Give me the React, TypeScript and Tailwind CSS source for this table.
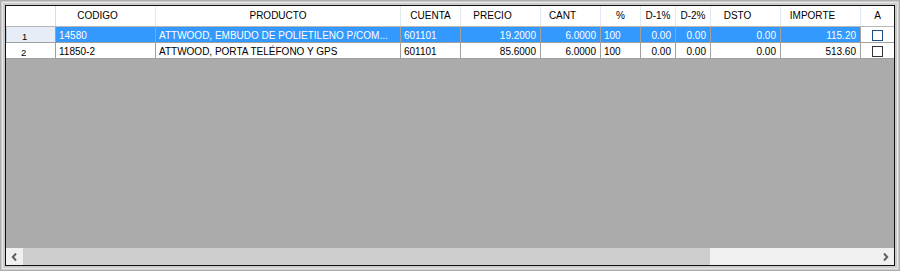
type Col = {
  key: string;
  label: string;
  cell: string;
  head: string;
};

const cols: Col[] = [
  { key: "codigo", label: "CODIGO", cell: "w-[100px] border-r text-left pl-[3px]", head: "w-[100px] pr-[16px]" },
  { key: "producto", label: "PRODUCTO", cell: "w-[245px] border-r text-left pl-[3px]", head: "w-[245px]" },
  { key: "cuenta", label: "CUENTA", cell: "w-[60px] border-r text-left pl-[3px]", head: "w-[60px]" },
  { key: "precio", label: "PRECIO", cell: "w-[80px] border-r text-right pr-[4px]", head: "w-[80px] pr-[16px]" },
  { key: "cant", label: "CANT", cell: "w-[60px] border-r text-right pr-[4px]", head: "w-[60px] pr-[16px]" },
  { key: "pct", label: "%", cell: "w-[40px] border-r text-left pl-[3px]", head: "w-[40px]" },
  { key: "d1", label: "D-1%", cell: "w-[35px] border-r text-right pr-[4px]", head: "w-[35px]" },
  { key: "d2", label: "D-2%", cell: "w-[35px] border-r text-right pr-[4px]", head: "w-[35px]" },
  { key: "dsto", label: "DSTO", cell: "w-[70px] border-r text-right pr-[4px]", head: "w-[70px] pr-[16px]" },
  { key: "importe", label: "IMPORTE", cell: "w-[80px] border-r text-right pr-[4px]", head: "w-[80px] pr-[16px]" },
];

const rows: Record<string, string>[] = [
  {
    codigo: "14580",
    producto: "ATTWOOD, EMBUDO DE POLIETILENO P/COM...",
    cuenta: "601101",
    precio: "19.2000",
    cant: "6.0000",
    pct: "100",
    d1: "0.00",
    d2: "0.00",
    dsto: "0.00",
    importe: "115.20",
  },
  {
    codigo: "11850-2",
    producto: "ATTWOOD, PORTA TELÉFONO Y GPS",
    cuenta: "601101",
    precio: "85.6000",
    cant: "6.0000",
    pct: "100",
    d1: "0.00",
    d2: "0.00",
    dsto: "0.00",
    importe: "513.60",
  },
];

function Chevron({ dir }: { dir: "left" | "right" }) {
  return (
    <svg width="7" height="8" viewBox="0 0 7 8">
      <polyline
        points={dir === "left" ? "5,0.5 1.8,4 5,7.5" : "2,0.5 5.2,4 2,7.5"}
        fill="none"
        stroke="#606060"
        strokeWidth="2"
      />
    </svg>
  );
}

export default function App() {
  return (
    <div className="w-[900px] h-[271px] bg-[#cbcbcb] border border-[#adadad] p-px font-['Liberation_Sans',Arial,sans-serif] text-[10px] text-black">
      <div className="h-full border border-[#e8e8e8] p-[2px]">
        <div className="flex h-full flex-col border border-[#101010] bg-[#ababab]">
          {/* header */}
          <div className="flex h-[21px] shrink-0 border-b border-[#b8b8b8] bg-white leading-[20px]">
            <div className="w-[50px] border-r border-[#dcdcdc]" />
            {cols.map((c) => (
              <div key={c.key} className={`${c.head} border-r border-[#e2eaf4] text-center`}>
                {c.label}
              </div>
            ))}
            <div className="w-[33px] text-center">A</div>
          </div>

          {/* rows */}
          {rows.map((r, i) => {
            const sel = i === 0;
            return (
              <div
                key={i}
                className={`flex h-[16px] shrink-0 border-b border-[#a0a0a0] leading-[17px] ${
                  sel ? "bg-[#3399ff] text-white" : "bg-white"
                }`}
              >
                <div
                  className={`w-[50px] border-r border-[#a0a0a0] pl-[15px] pt-px text-[9.5px] text-black ${
                    sel ? "bg-[#e6edf6] border-l border-l-[#c4cedb]" : "bg-white"
                  }`}
                >
                  {i + 1}
                </div>
                {cols.map((c) => (
                  <div
                    key={c.key}
                    className={`${c.cell} overflow-hidden whitespace-nowrap border-[#a0a0a0]`}
                  >
                    {r[c.key]}
                  </div>
                ))}
                <div className="flex w-[33px] items-center justify-center bg-white pt-px">
                  <div
                    className={`h-[11px] w-[11px] border bg-white ${
                      sel ? "border-[#1d4f86]" : "border-[#333333]"
                    }`}
                  />
                </div>
              </div>
            );
          })}

          <div className="flex-1" />

          {/* horizontal scrollbar */}
          <div className="flex h-[17px] shrink-0 bg-[#f0f0f0]">
            <div className="flex w-[17px] items-center justify-center">
              <Chevron dir="left" />
            </div>
            <div className="flex flex-1">
              <div className="w-[687px] bg-[#cdcdcd]" />
              <div className="flex-1" />
            </div>
            <div className="flex w-[17px] items-center justify-center">
              <Chevron dir="right" />
            </div>
          </div>
        </div>
      </div>
    </div>
  );
}
